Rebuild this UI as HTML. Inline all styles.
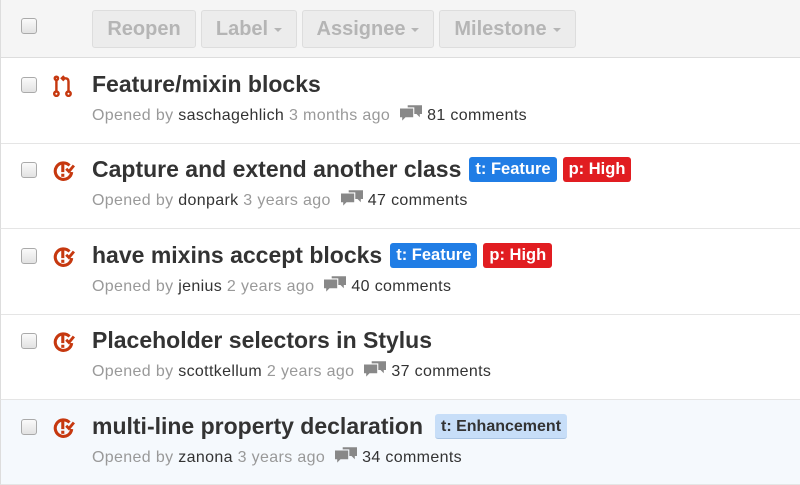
<!DOCTYPE html>
<html><head><meta charset="utf-8"><style>
*{box-sizing:border-box;margin:0;padding:0}
body{width:800px;height:485px;overflow:hidden;background:#fff;font-family:"Liberation Sans",Arial,sans-serif;position:relative}
.hdr{position:absolute;left:0;top:0;width:800px;height:58px;background:#f5f5f5;border-bottom:1px solid #ddd;border-left:1px solid #ddd}
.cb{position:absolute;left:20px;width:16px;height:16px;border:1px solid #aaa;border-radius:3px;background:linear-gradient(#fafafa,#e2e2e2)}
.btn{position:absolute;top:10px;height:38px;border:1px solid #ddd;border-radius:3px;background:#ececec;color:#b5b5b5;font-weight:bold;font-size:20px;line-height:36px;text-align:center}
.btn i{display:inline-block;width:0;height:0;border-left:4px solid transparent;border-right:4px solid transparent;border-top:4px solid #b5b5b5;vertical-align:middle;margin-left:6px}
.row{position:absolute;left:0;width:800px;height:86px;border-bottom:1px solid #e5e5e5;border-left:1px solid #ddd}
.t{position:absolute;left:91px;top:13px;font-size:23px;font-weight:bold;color:#333;white-space:nowrap;letter-spacing:0}
.m{position:absolute;left:91px;top:47px;font-size:16px;color:#999;white-space:nowrap;letter-spacing:0.35px}
.m b{font-weight:normal;color:#333}
.lb{display:inline-block;font-size:16.5px;font-weight:bold;color:#fff;padding:0 6px;height:25px;line-height:25px;border-radius:3px;vertical-align:3px;margin-left:8px;letter-spacing:0}
.ic{position:absolute;left:52px;top:17px}
.cm{display:inline-block;vertical-align:-3px;margin:0 5px 0 10px}
</style></head><body>
<div class="hdr">
<div class="cb" style="top:18px"></div>
<div class="btn" style="left:91px;width:104px">Reopen</div>
<div class="btn" style="left:200px;width:96px">Label<i></i></div>
<div class="btn" style="left:301px;width:132px">Assignee<i></i></div>
<div class="btn" style="left:438px;width:137px">Milestone<i></i></div>
</div>

<div class="row" style="top:58px">
<div class="cb" style="top:19px"></div>
<svg class="ic" width="20" height="22" viewBox="0 0 18 20"><g fill="none" stroke="#c6380f" stroke-width="2.2"><circle cx="3" cy="17" r="2"/><line x1="3" y1="4" x2="3" y2="15"/><circle cx="3" cy="3" r="1.5"/><circle cx="14" cy="17" r="2"/><path d="M14 15V6Q14 3 11 3H8"/><path d="M10 1L8 3L10 5"/></g></svg>
<div class="t">Feature/mixin blocks</div>
<div class="m">Opened by <b>saschagehlich</b> 3 months ago<svg class="cm" width="22" height="18" viewBox="0 0 20 16"><path d="M0 3h12v8H5l-3 3v-3H0z M7 0h13v8h-2v3l-3-3h-2V2H7z" fill="#888"/></svg><b>81 comments</b></div>
</div>

<div class="row" style="top:143px">
<div class="cb" style="top:19px"></div>
<svg class="ic" width="22" height="22" viewBox="0 0 20 20"><path d="M15 5A7.5 7.5 0 1 0 17 11" fill="none" stroke="#c6380f" stroke-width="2.8"/><rect x="7.5" y="4" width="2.8" height="7" fill="#c6380f"/><rect x="7.5" y="12.5" width="2.8" height="2.8" fill="#c6380f"/><path d="M12 8l2.5 2.5L19 5" fill="none" stroke="#c6380f" stroke-width="2.6"/></svg>
<div class="t">Capture and extend another class<span class="lb" style="background:#207de5">t: Feature</span><span class="lb" style="background:#e11d21;margin-left:6px">p: High</span></div>
<div class="m">Opened by <b>donpark</b> 3 years ago<svg class="cm" width="22" height="18" viewBox="0 0 20 16"><path d="M0 3h12v8H5l-3 3v-3H0z M7 0h13v8h-2v3l-3-3h-2V2H7z" fill="#888"/></svg><b>47 comments</b></div>
</div>

<div class="row" style="top:229px">
<div class="cb" style="top:19px"></div>
<svg class="ic" width="22" height="22" viewBox="0 0 20 20"><path d="M15 5A7.5 7.5 0 1 0 17 11" fill="none" stroke="#c6380f" stroke-width="2.8"/><rect x="7.5" y="4" width="2.8" height="7" fill="#c6380f"/><rect x="7.5" y="12.5" width="2.8" height="2.8" fill="#c6380f"/><path d="M12 8l2.5 2.5L19 5" fill="none" stroke="#c6380f" stroke-width="2.6"/></svg>
<div class="t">have mixins accept blocks<span class="lb" style="background:#207de5">t: Feature</span><span class="lb" style="background:#e11d21;margin-left:6px">p: High</span></div>
<div class="m">Opened by <b>jenius</b> 2 years ago<svg class="cm" width="22" height="18" viewBox="0 0 20 16"><path d="M0 3h12v8H5l-3 3v-3H0z M7 0h13v8h-2v3l-3-3h-2V2H7z" fill="#888"/></svg><b>40 comments</b></div>
</div>

<div class="row" style="top:314px">
<div class="cb" style="top:19px"></div>
<svg class="ic" width="22" height="22" viewBox="0 0 20 20"><path d="M15 5A7.5 7.5 0 1 0 17 11" fill="none" stroke="#c6380f" stroke-width="2.8"/><rect x="7.5" y="4" width="2.8" height="7" fill="#c6380f"/><rect x="7.5" y="12.5" width="2.8" height="2.8" fill="#c6380f"/><path d="M12 8l2.5 2.5L19 5" fill="none" stroke="#c6380f" stroke-width="2.6"/></svg>
<div class="t">Placeholder selectors in Stylus</div>
<div class="m">Opened by <b>scottkellum</b> 2 years ago<svg class="cm" width="22" height="18" viewBox="0 0 20 16"><path d="M0 3h12v8H5l-3 3v-3H0z M7 0h13v8h-2v3l-3-3h-2V2H7z" fill="#888"/></svg><b>37 comments</b></div>
</div>

<div class="row" style="top:400px;background:#f5f9fd;height:85px">
<div class="cb" style="top:19px"></div>
<svg class="ic" width="22" height="22" viewBox="0 0 20 20"><path d="M15 5A7.5 7.5 0 1 0 17 11" fill="none" stroke="#c6380f" stroke-width="2.8"/><rect x="7.5" y="4" width="2.8" height="7" fill="#c6380f"/><rect x="7.5" y="12.5" width="2.8" height="2.8" fill="#c6380f"/><path d="M12 8l2.5 2.5L19 5" fill="none" stroke="#c6380f" stroke-width="2.6"/></svg>
<div class="t">multi-line property declaration<span class="lb" style="background:#c7def8;color:#333;margin-left:12px;font-size:16px;border-bottom:1px solid #a9c4e3">t: Enhancement</span></div>
<div class="m">Opened by <b>zanona</b> 3 years ago<svg class="cm" width="22" height="18" viewBox="0 0 20 16"><path d="M0 3h12v8H5l-3 3v-3H0z M7 0h13v8h-2v3l-3-3h-2V2H7z" fill="#888"/></svg><b>34 comments</b></div>
</div>
</body></html>
